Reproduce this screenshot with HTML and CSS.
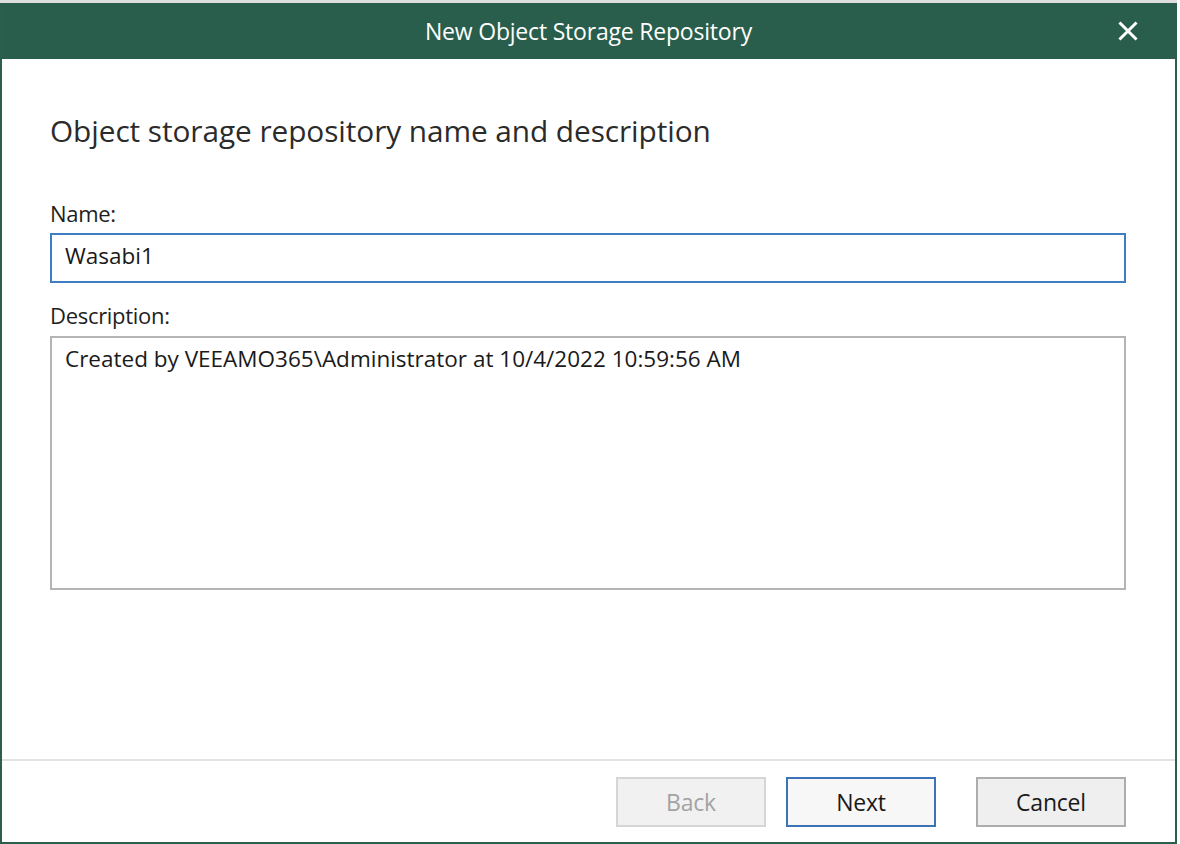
FILE: index.html
```html
<!DOCTYPE html>
<html>
<head>
<meta charset="utf-8">
<link rel="stylesheet" href="styles.css">
</head>
<body>
<div class="window">
  <div class="titlebar">
    <span class="title">New Object Storage Repository</span>
    <span class="close" aria-label="Close">
      <svg width="20" height="20" viewBox="0 0 20 20"><path d="M2.5 2.5 L17.5 17.5 M17.5 2.5 L2.5 17.5" stroke="#fff" stroke-width="3" stroke-linecap="square"/></svg>
    </span>
  </div>
  <div class="content">
    <h1 class="heading">Object storage repository name and description</h1>
    <label class="label">Name:</label>
    <div class="input focused">Wasabi1</div>
    <label class="label desc-label">Description:</label>
    <div class="input textarea">Created by VEEAMO365\Administrator at 10/4/2022 10:59:56 AM</div>
  </div>
  <div class="footer">
    <button class="btn disabled">Back</button>
    <button class="btn primary">Next</button>
    <button class="btn cancel">Cancel</button>
  </div>
</div>
</body>
</html>
```
FILE: styles.css
```css
* { box-sizing: border-box; }
html, body { margin: 0; padding: 0; background: #fff; }
body {
  width: 1180px;
  height: 844px;
  font-family: "Open Sans", "Noto Sans", sans-serif;
  color: #1e1e1e;
  padding-top: 3px;
  background: #fff;
}
.window {
  width: 1177px;
  height: 841px;
  border-left: 2px solid #2b5f4d;
  border-right: 2px solid #2b5f4d;
  border-bottom: 2px solid #2b5f4d;
  display: flex;
  flex-direction: column;
  background: #fff;
  box-shadow: 0 -3px 0 #dedede;
}
.titlebar {
  height: 56px;
  background: #285e4b;
  display: flex;
  align-items: center;
  justify-content: center;
  position: relative;
  flex: none;
}
.title {
  color: #fff;
  font-size: 23px;
  letter-spacing: -0.2px;
  margin-top: -1px;
}
.close {
  position: absolute;
  right: 37px;
  top: 18px;
  width: 20px;
  height: 20px;
}
.content {
  flex: 1;
  padding: 54px 49px 0 48px;
  display: flex;
  flex-direction: column;
}
.heading {
  margin: 0 0 51px 0;
  font-weight: normal;
  font-size: 29.8px;
  color: #2b2b2b;
  line-height: 36px;
  letter-spacing: -0.07px;
}
.label {
  font-size: 22px;
  line-height: 26px;
  color: #1e1e1e;
  margin-bottom: 7px;
  letter-spacing: -0.3px;
}
.desc-label { margin-top: 19px; margin-bottom: 8px; }
.input {
  height: 50px;
  border: 2px solid #3c7dc4;
  font-size: 22.5px;
  padding: 6px 13px;
  line-height: 30px;
  color: #1a1a1a;
  letter-spacing: 0;
}
.textarea {
  height: 254px;
  border: 2px solid #b4b4b4;
}
.footer {
  flex: none;
  height: 83px;
  border-top: 2px solid #e3e3e3;
  display: flex;
  justify-content: flex-end;
  align-items: flex-start;
  padding: 16px 49px 0 0;
  gap: 20px;
}
.btn {
  width: 150px;
  height: 50px;
  font-family: inherit;
  font-size: 23px;
  letter-spacing: -0.2px;
  background: #efefef;
  border: 2px solid #adadad;
  color: #1a1a1a;
  padding: 0;
}
.btn.disabled {
  color: #a3a3a3;
  border-color: #d6d6d6;
  background: #f1f1f1;
}
.btn.primary {
  border-color: #3b73b6;
  background: #f7f7f7;
}
.btn.cancel { margin-left: 20px; }
```
